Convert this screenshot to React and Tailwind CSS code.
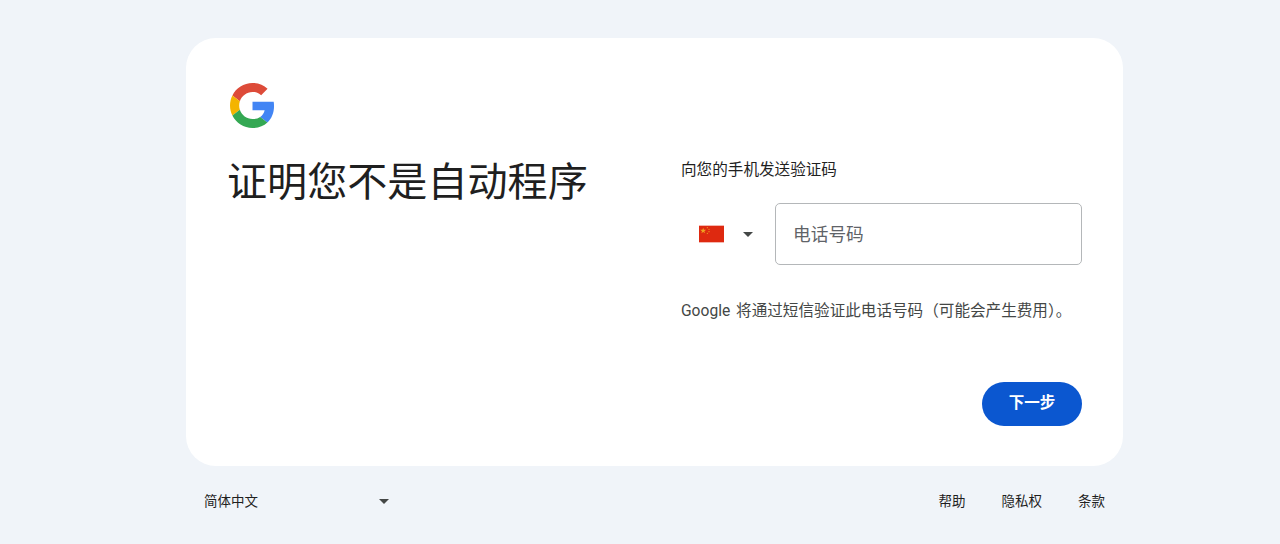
import { useState } from "react";

const fontStack = "font-['Roboto','Noto_Sans_CJK_SC',sans-serif]";

function GoogleLogo() {
  return (
    <svg viewBox="0 0 48 48" className="w-[45px] h-[45px] block">
      <path fill="#DD4B39" d="M24 9.5c3.54 0 6.71 1.22 9.21 3.6l6.85-6.85C35.9 2.38 30.47 0 24 0 14.62 0 6.51 5.38 2.56 13.22l7.98 6.19C12.43 13.72 17.74 9.5 24 9.5z" />
      <path fill="#4285F4" d="M46.98 24.55c0-1.57-.15-3.09-.38-4.55H24v9.02h12.94c-.58 2.96-2.26 5.48-4.78 7.18l7.73 6c4.51-4.18 7.09-10.36 7.09-17.65z" />
      <path fill="#F4B400" d="M10.53 28.59c-.48-1.45-.76-2.99-.76-4.59s.27-3.14.76-4.59l-7.98-6.19C.92 16.46 0 20.12 0 24c0 3.88.92 7.54 2.56 10.78l7.97-6.19z" />
      <path fill="#34A853" d="M24 48c6.48 0 11.93-2.13 15.89-5.81l-7.73-6c-2.15 1.45-4.92 2.3-8.16 2.3-6.26 0-11.57-4.22-13.47-9.91l-7.98 6.19C6.51 42.62 14.62 48 24 48z" />
    </svg>
  );
}

function ChinaFlag() {
  return (
    <svg viewBox="0 0 30 20" className="w-[25px] h-[18px] block">
      <rect width="30" height="20" fill="#de2910" />
      <polygon fill="#f0a020" points="5,2.4 5.9,5 8.6,5 6.4,6.6 7.2,9.2 5,7.6 2.8,9.2 3.6,6.6 1.4,5 4.1,5" />
      <circle cx="10" cy="2.4" r="0.7" fill="#f0a020" />
      <circle cx="12" cy="4.4" r="0.7" fill="#f0a020" />
      <circle cx="12" cy="7.2" r="0.7" fill="#f0a020" />
      <circle cx="10" cy="9.2" r="0.7" fill="#f0a020" />
    </svg>
  );
}

function Caret() {
  return <span className="w-0 h-0 border-x-[5px] border-x-transparent border-t-[5px] border-t-[#444746]"></span>;
}

export default function App() {
  const [phone, setPhone] = useState("");

  return (
    <div className={`h-[544px] bg-[#f0f4f9] pt-[38px] pl-[186px] overflow-hidden ${fontStack}`}>
      <div className="w-[937px] h-[428px] bg-white rounded-[30px] flex pl-[41px] pt-[45px]">
        {/* Left */}
        <div className="w-[454px]">
          <div className="pl-[3px]">
            <GoogleLogo />
          </div>
          <h1 className="mt-[25px] text-[40.1px] leading-[60px] font-normal text-[#1f1f1f] whitespace-nowrap">
            证明您不是自动程序
          </h1>
        </div>

        {/* Right */}
        <div className="w-[401px] pt-[75px] flex flex-col">
          <p className="text-[15.6px] leading-[24px] text-[#1f1f1f]">向您的手机发送验证码</p>

          <div className="mt-[21px] flex items-center">
            <div className="w-[94px] flex items-center pl-[18px] gap-[19px]">
              <ChinaFlag />
              <Caret />
            </div>
            <input
              value={phone}
              onChange={(e) => setPhone(e.target.value)}
              placeholder="电话号码"
              className="w-[307px] h-[62px] px-[17px] pt-[2px] rounded-[5px] border border-[#b4b7b9] text-[17.7px] text-[#1f1f1f] placeholder:text-[#5f6368] outline-none"
            />
          </div>

          <p className="mt-[34px] text-[15.6px] leading-[24px] text-[#444746] whitespace-nowrap [word-spacing:2px]">
            Google 将通过短信验证此电话号码（可能会产生费用）。
          </p>

          <div className="mt-[59px] flex justify-end">
            <button className="w-[100px] h-[44px] rounded-full bg-[#0b57d0] text-white text-[15.5px] font-semibold">
              下一步
            </button>
          </div>
        </div>
      </div>

      {/* Footer */}
      <div className="w-[937px] mt-[23px] h-[24px] flex items-center justify-between text-[13.5px] text-[#1f1f1f]">
        <div className="w-[203px] pl-[18px] flex items-center justify-between">
          <span>简体中文</span>
          <Caret />
        </div>
        <div className="flex items-center gap-[36px] pr-[18px]">
          <span>帮助</span>
          <span>隐私权</span>
          <span>条款</span>
        </div>
      </div>
    </div>
  );
}
